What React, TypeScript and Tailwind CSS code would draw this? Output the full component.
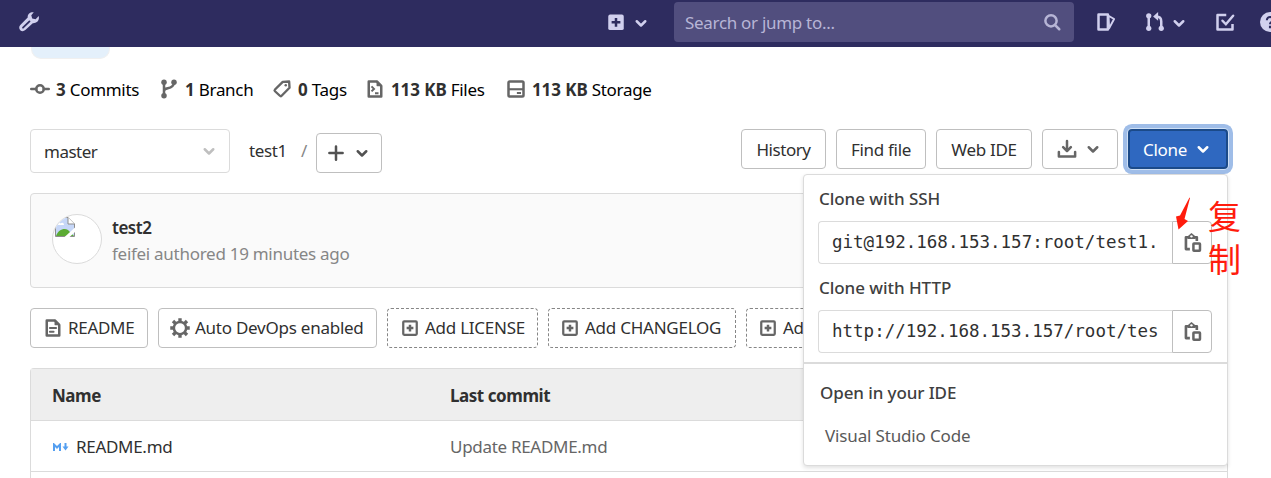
import type { ReactNode } from "react";

type IconProps = { className?: string; children: ReactNode };

function Icon({ className = "size-5", children }: IconProps) {
  return (
    <svg
      viewBox="0 0 16 16"
      fill="none"
      stroke="currentColor"
      strokeWidth="2"
      className={`shrink-0 ${className}`}
    >
      {children}
    </svg>
  );
}

const Chevron = ({ className = "size-5" }: { className?: string }) => (
  <Icon className={className}>
    <path d="M4.600 6.600 8 10l3.400-3.400" strokeLinecap="round" strokeLinejoin="round" />
  </Icon>
);

const CommitIcon = () => (
  <Icon>
    <circle cx="8" cy="8" r="3" />
    <path d="M1 8h4M11 8h4" strokeLinecap="round" />
  </Icon>
);

const BranchIcon = () => (
  <Icon>
    <path d="M4 2.500v11M4 9.500c0-1.500 1-1.700 3-2.100C10 6.800 11.800 6 12 3" />
    <g fill="currentColor" stroke="none">
      <circle cx="4" cy="2.600" r="2.200" />
      <circle cx="12" cy="2.600" r="2.200" />
      <circle cx="4" cy="13.400" r="2.200" />
    </g>
  </Icon>
);

const TagIcon = () => (
  <Icon>
    <path d="m8.600 2.300 5.100-.3.300 5-6.300 6.400a1 1 0 0 1-1.400 0L2.400 9.800a1 1 0 0 1 0-1.400z" strokeLinejoin="round" strokeWidth="1.900" />
    <circle cx="11" cy="5" r="1" fill="currentColor" stroke="none" />
  </Icon>
);

const FilesIcon = () => (
  <Icon>
    <path d="M3 2h6.500L13 5.500V14H3z" strokeLinejoin="round" />
    <path d="M9.500 1.500v4h4z" fill="currentColor" strokeWidth=".5" />
    <path d="m5.200 5.900 2 2-2 2M8 11.300h2.800" strokeWidth="1.600" />
  </Icon>
);

const StorageIcon = () => (
  <Icon>
    <rect x="2" y="2" width="12" height="12" rx="1" />
    <path d="M2 8.200h12" strokeWidth="1.700" />
    <path d="M8.700 11.200h3.300" strokeWidth="1.600" />
  </Icon>
);

const DocIcon = () => (
  <Icon>
    <path d="M3 2h6.500L13 5.500V14H3z" strokeLinejoin="round" />
    <path d="M9.500 1.500v4h4z" fill="currentColor" strokeWidth=".5" />
    <path d="M5.500 8h5M5.500 11h3" strokeWidth="1.500" strokeLinecap="round" />
  </Icon>
);

const GearIcon = () => (
  <Icon>
    <circle cx="8" cy="8" r="4.900" />
    <path
      d="M8 .2v2.600M8 13.200v2.600M.2 8h2.600M13.200 8h2.600M2.400 2.400l1.900 1.900M11.700 11.700l1.900 1.900M13.600 2.400l-1.900 1.900M4.300 11.700l-1.900 1.900"
      strokeWidth="2.700"
    />
  </Icon>
);

const AddIcon = () => (
  <Icon className="mx-px size-[18px]">
    <rect x="2" y="2" width="12" height="12" rx=".8" />
    <path d="M8 5v6M5 8h6" strokeWidth="2.200" />
  </Icon>
);

const PlusIcon = () => (
  <Icon>
    <path d="M8 2.700v10.600M2.700 8h10.600" strokeLinecap="round" />
  </Icon>
);

const DownloadIcon = () => (
  <Icon>
    <path d="M8 1.500v7.500" strokeLinecap="round" />
    <path d="m4.900 6.500 3.100 3.100 3.100-3.100" strokeLinejoin="round" strokeLinecap="round" />
    <path d="M1.500 10.300V14h13v-3.700" strokeLinejoin="round" strokeLinecap="round" />
  </Icon>
);

const CopyIcon = () => (
  <Icon className="size-[21px]">
    <path d="M6 13H3V4h2.500M11.300 6.800V4H9.500" strokeLinejoin="round" />
    <path d="M4.300 5.300V3.200L7.200.7l3 2.500v2.100z" fill="currentColor" stroke="none" />
    <circle cx="7.200" cy="3.300" r=".9" fill="white" stroke="none" />
    <rect x="8.700" y="8.700" width="5" height="5.600" rx=".4" strokeWidth="1.900" />
  </Icon>
);

const WrenchIcon = () => (
  <svg viewBox="0 0 22 22" className="size-[22px] shrink-0" fill="none">
    <path
      d="M15.800 1.300c-3.400-.6-6.500 1.600-6.100 5.300L2.300 14.100c-3.300 3.600 1.500 8.300 5 5l7.500-6.800c4 .2 7-2.900 5.900-7.200L17.600 8.200l-3.400-.6-.9-3.300z"
      fill="currentColor"
    />
    <path d="m5 16.700 6.500-6.300" stroke="#2e2c5f" strokeWidth="1.800" strokeLinecap="round" />
  </svg>
);

const BrokenImage = () => (
  <svg viewBox="0 0 20 20" className="size-5" fill="none">
    <path d="M1 1h12l6 6v12H1z" fill="#c6d7f8" />
    <path d="M3 7.500c0-2 2-2.300 2.600-1C7 4.800 9.500 6 8.900 8H3z" fill="white" />
    <path d="M1 19c2-6 8-8.500 12-6l6 6z" fill="#5cab34" />
    <path d="M.500 19.500V.500H13l6.500 6.500v12.500z" stroke="#8d8d8d" />
    <path d="M13 .500V7h6.500" fill="white" stroke="#8d8d8d" />
    <path d="M9 20.500 20.500 10v4.500L14 20.500z" fill="white" />
  </svg>
);

const base =
  "flex h-10 shrink-0 items-center rounded-[4px] border bg-white text-[#303030] whitespace-nowrap";
const btn = `${base} border-[#bfbfbf]`;
const dashed = `${base} border-dashed border-[#868686]`;

function Stat({ icon, value, label, className }: { icon: ReactNode; value: string; label: string; className: string }) {
  return (
    <div className={`flex shrink-0 items-center whitespace-nowrap ${className}`}>
      <span className="text-[#666]">{icon}</span>
      <span className="mt-[2px] ml-[6px] text-black">
        <b className="font-bold tracking-[-0.1px] text-[#303030]">{value}</b> {label}
      </span>
    </div>
  );
}

function CloneField({ label, url, className }: { label: string; url: string; className: string }) {
  return (
    <div className={className}>
      <div className="h-6 pl-px leading-6 font-medium tracking-[-0.05px] text-[#404040]">{label}</div>
      <div className="mt-[10px] flex h-[43px] w-[394px]">
        <div className="flex flex-1 items-center overflow-hidden rounded-l-[4px] border border-r-0 border-[#dbdbdb] px-[13px]">
          <span className="w-[327px] overflow-hidden font-['DejaVu_Sans_Mono',monospace] text-[17.5px] tracking-normal whitespace-nowrap text-[#303030]">
            {url}
          </span>
        </div>
        <div className="flex w-10 items-center justify-center rounded-r-[4px] border border-[#bfbfbf] text-[#666]">
          <CopyIcon />
        </div>
      </div>
    </div>
  );
}

function Header() {
  return (
    <header className="flex h-[47px] shrink-0 items-center overflow-hidden bg-[#2e2c5f] text-[#d1d0ee]">
      <div className="mt-[-3px] ml-[18px] w-[588px] shrink-0">
        <WrenchIcon />
      </div>
      <svg viewBox="0 0 16 16" className="mt-[-3px] size-5 shrink-0">
        <rect x="1.800" y="2" width="12.400" height="12.400" rx="1.500" fill="currentColor" />
        <path d="M8 4.700v7M4.500 8.200h7" stroke="#2e2c5f" strokeWidth="2" />
      </svg>
      <Chevron className="mt-[-1px] ml-[5px] size-5" />
      <div className="mt-[-3px] ml-[23px] flex h-10 w-[400px] shrink-0 items-center justify-between rounded-[4px] bg-[#514e7e] pr-3 pl-[11px]">
        <span className="mt-[2px] tracking-[-0.3px] text-[#b7b5d6]">Search or jump to...</span>
        <Icon className="size-5 text-[#b7b5d6]">
          <circle cx="7.200" cy="7" r="4.500" />
          <path d="m10.500 10.500 3.300 3.300" strokeLinecap="round" />
        </Icon>
      </div>
      <Icon className="mt-[-3px] ml-[22px] size-5">
        <path d="M2 2h7.500v12H2z" strokeLinejoin="round" />
        <path d="m10 3 4.500 2.600-4 7.400z" strokeLinejoin="round" strokeWidth="1.500" />
      </Icon>
      <Icon className="mt-[-3px] ml-[29px] size-5">
        <path d="M3 3v10M13 13V7.500c0-2.700-1.500-4-4-4" />
        <path d="M10.500 0 6.500 3.500l4 3.500z" fill="currentColor" stroke="none" />
        <g fill="currentColor" stroke="none">
          <circle cx="3" cy="3" r="2.100" />
          <circle cx="3" cy="13" r="2.100" />
          <circle cx="13" cy="13" r="2.100" />
        </g>
      </Icon>
      <Chevron className="mt-[-1px] ml-1 size-5" />
      <Icon className="mt-[-3px] ml-[26px] size-5">
        <path d="M9 2.300H2V14h12V9.500" strokeLinejoin="round" />
        <path d="m6 7 2.700 2.800L14.500 3" strokeLinecap="round" />
      </Icon>
      <svg viewBox="0 0 16 16" className="mt-[-3px] ml-[25px] size-5 shrink-0">
        <circle cx="8" cy="8" r="8" fill="currentColor" />
        <path d="M5.500 6.500c0-3.500 5.200-3.200 5 0C10.400 8 8 8 8 9.700M8 11v2" stroke="#2e2c5f" strokeWidth="1.700" fill="none" />
      </svg>
    </header>
  );
}

export default function App() {
  return (
    <div className="relative flex h-[478px] w-[1271px] flex-col overflow-hidden bg-white font-['Noto_Sans',sans-serif] text-[17px] tracking-[-0.3px] text-[#303030]">
      <div className="flex h-[47px] shrink-0 bg-[#2e2c5f]">
        <div className="w-[1280px] shrink-0">
          <Header />
        </div>
      </div>
      <main className="flex w-[1228px] flex-col pl-[30px]">
        <div className="ml-px h-3 w-[79px] rounded-b-[10px] border border-t-0 border-[#f0f0f0] bg-[#e4f0fb]" />

        <div className="mt-[18px] flex h-6 items-center">
          <Stat className="w-[129px]" icon={<CommitIcon />} value="3" label="Commits" />
          <Stat className="w-[113px]" icon={<BranchIcon />} value="1" label="Branch" />
          <Stat className="w-[93px]" icon={<TagIcon />} value="0" label="Tags" />
          <Stat className="w-[141px]" icon={<FilesIcon />} value="113 KB" label="Files" />
          <Stat className="w-[150px]" icon={<StorageIcon />} value="113 KB" label="Storage" />
        </div>

        <div className="mt-7 flex h-11 items-start">
          <div className="flex h-11 w-[200px] items-center justify-between rounded-[4px] border border-[#dbdbdb] pr-[10px] pl-[13px]">
            <span className="mt-[2px] tracking-[-0.5px]">master</span>
            <Chevron className="size-5 text-[#bfbfbf]" />
          </div>
          <span className="ml-[19px] flex h-11 w-[52px] items-center tracking-[-0.4px]">test1</span>
          <span className="flex h-11 w-[15px] items-center text-[#868686]">/</span>
          <div className={`${btn} mt-1 w-[66px] gap-[6px] pl-[9px]`}>
            <span className="text-[#525252]"><PlusIcon /></span>
            <span className="text-[#525252]"><Chevron /></span>
          </div>
          <div className="ml-auto flex gap-[10px]">
            <div className={`${btn} w-[85px] justify-center pt-px tracking-[-0.45px]`}>History</div>
            <div className={`${btn} w-[90px] justify-center pt-px`}>Find file</div>
            <div className={`${btn} w-[96px] justify-center pt-px`}>Web IDE</div>
            <div className={`${btn} w-[76px] gap-[6px] pl-[14px]`}>
              <span className="text-[#666]"><DownloadIcon /></span>
              <span className="text-[#666]"><Chevron /></span>
            </div>
            <div className="flex h-10 w-[100px] items-center rounded-[4px] border-2 border-[#1b4a89] bg-[#2f68c0] pl-[13px] text-white shadow-[0_0_0_1px_#cfe0f5,0_0_0_5px_#9fbde8]">
              <span className="mt-px w-[45px]">Clone</span>
              <Chevron className="ml-[5px] size-5" />
            </div>
          </div>
        </div>

        <div className="mt-5 flex h-[95px] items-center rounded-[4px] border border-[#dbdbdb] bg-[#fafafa] pl-[21px]">
          <div className="mt-[-3px] size-[50px] overflow-hidden rounded-full border border-[#dbdbdb] bg-white pt-[2px] pl-[2px]">
            <BrokenImage />
          </div>
          <div className="ml-[10px] leading-[26px]">
            <div className="font-semibold tracking-[-0.5px]">test2</div>
            <div className="tracking-[-0.28px] text-[#868686]">feifei authored 19 minutes ago</div>
          </div>
        </div>

        <div className="mt-5 flex gap-[10px]">
          <div className={`${btn} w-[118px] gap-[5px] pl-3`}>
            <span className="text-[#666]"><DocIcon /></span>README
          </div>
          <div className={`${btn} w-[219px] gap-[5px] pl-[11px] tracking-[-0.25px]`}>
            <span className="text-[#666]"><GearIcon /></span>Auto DevOps enabled
          </div>
          <div className={`${dashed} w-[151px] gap-[5px] pl-3 tracking-[-0.25px]`}>
            <span className="text-[#666]"><AddIcon /></span>Add LICENSE
          </div>
          <div className={`${dashed} w-[188px] gap-[5px] pl-[11px] tracking-[-0.25px]`}>
            <span className="text-[#666]"><AddIcon /></span>Add CHANGELOG
          </div>
          <div className={`${dashed} w-[80px] gap-[5px] pl-[11px]`}>
            <span className="text-[#666]"><AddIcon /></span>Add
          </div>
        </div>

        <div className="mt-5 h-[112px] rounded-t-[4px] border border-b-0 border-[#dbdbdb]">
          <div className="flex h-[52px] items-center border-b border-[#dbdbdb] bg-[#eee] pt-[2px] pl-[21px] font-bold tracking-[-0.45px]">
            <span className="w-[398px]">Name</span>
            <span>Last commit</span>
          </div>
          <div className="flex h-[51px] items-center border-b border-[#dbdbdb] pt-px pl-[21px]">
            <svg viewBox="0 0 18 8" className="h-2 w-[18px]" fill="none" stroke="#559ff0" strokeWidth="2">
              <path d="M2 8V1.500l3 3 3-3V8" />
              <path d="M13.500 0v5" />
              <path d="M10.500 3.500h6l-3 4z" fill="#559ff0" stroke="none" />
            </svg>
            <span className="ml-[6px] w-[374px]">README.md</span>
            <span className="text-[#666]">Update README.md</span>
          </div>
        </div>
      </main>

      <div className="absolute top-[174px] left-[803px] h-[292px] w-[425px] rounded-[4px] border border-[#dbdbdb] bg-white shadow-[0_2px_4px_rgba(0,0,0,0.12)]">
        <CloneField className="mt-3 ml-[14px]" label="Clone with SSH" url="git@192.168.153.157:root/test1.git" />
        <CloneField className="mt-3 ml-[14px]" label="Clone with HTTP" url="http://192.168.153.157/root/test1.git" />
        <div className="mt-[9px] h-[2px] bg-[#dbdbdb]" />
        <div className="mt-[17px] ml-4 leading-6 font-medium tracking-[-0.1px] text-[#404040]">Open in your IDE</div>
        <div className="mt-[19px] ml-[21px] leading-6 tracking-[-0.15px] text-[#595959]">Visual Studio Code</div>
      </div>

      <svg viewBox="0 0 16 34" className="absolute top-[197px] left-[1175px] h-[34px] w-4">
        <path d="M14.500.500 5 18.500 1 19.500 3.500 32.500 13 24l-3.500-2L15 1z" fill="#ff1c0d" />
      </svg>
      <div className="absolute top-[194px] left-[1208px] w-[33px] font-['Noto_Sans_CJK_SC',sans-serif] text-[33px] leading-[43px] tracking-normal text-[#ff1c0d]">
        复制
      </div>
    </div>
  );
}
